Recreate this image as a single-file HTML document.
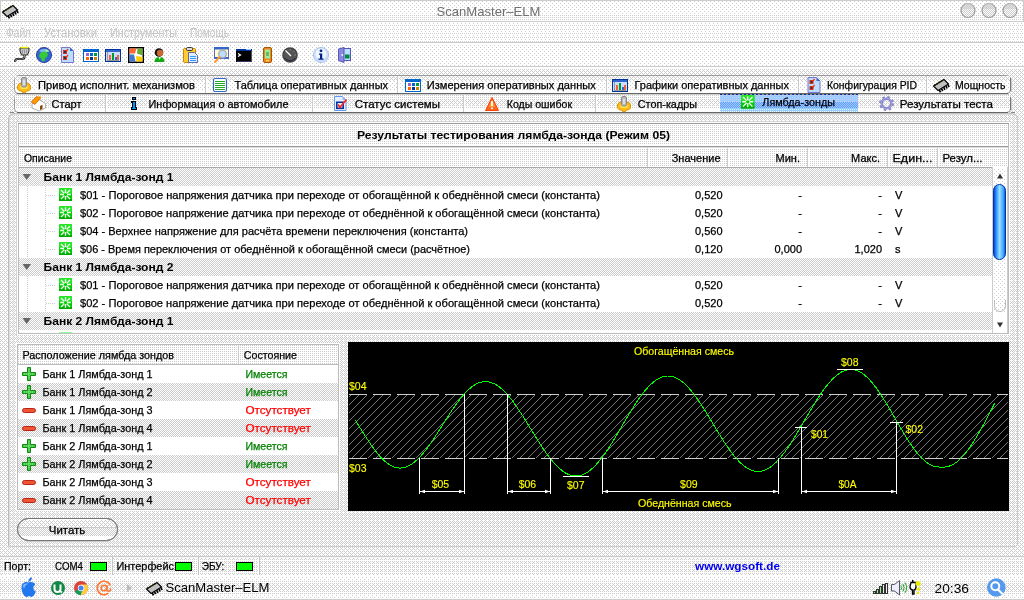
<!DOCTYPE html>
<html lang="ru"><head><meta charset="utf-8"><title>ScanMaster-ELM</title>
<style>
html,body{margin:0;padding:0;background:#fff;width:1024px;height:600px;overflow:hidden}
svg{display:block;position:absolute;left:0;top:0;will-change:transform}
text{font-family:'Liberation Sans',sans-serif;white-space:pre}
</style></head><body>
<svg width="1024" height="600" viewBox="0 0 1024 600" shape-rendering="crispEdges">
<defs>
<pattern id="p8" width="4" height="4" patternUnits="userSpaceOnUse"><rect width="4" height="4" fill="#fff"/><rect x="0" y="3" width="1" height="1" fill="#ccc"/><rect x="2" y="1" width="1" height="1" fill="#ccc"/></pattern>
<pattern id="p4" width="2" height="2" patternUnits="userSpaceOnUse"><rect width="2" height="2" fill="#fff"/><rect x="0" y="1" width="1" height="1" fill="#ccc"/></pattern>
<pattern id="p38" width="4" height="4" patternUnits="userSpaceOnUse"><rect width="4" height="4" fill="#fff"/><rect x="0" y="1" width="1" height="1" fill="#ccc"/><rect x="2" y="1" width="1" height="1" fill="#ccc"/><rect x="0" y="3" width="1" height="1" fill="#ccc"/><rect x="2" y="3" width="1" height="1" fill="#ccc"/><rect x="1" y="0" width="1" height="1" fill="#ccc"/><rect x="3" y="2" width="1" height="1" fill="#ccc"/></pattern>
<pattern id="p2" width="2" height="2" patternUnits="userSpaceOnUse"><rect width="2" height="2" fill="#fff"/><rect x="0" y="1" width="1" height="1" fill="#ccc"/><rect x="1" y="0" width="1" height="1" fill="#ccc"/></pattern>
<pattern id="p716" width="4" height="4" patternUnits="userSpaceOnUse"><rect width="4" height="4" fill="#fff"/><rect x="0" y="1" width="1" height="1" fill="#ccc"/><rect x="2" y="1" width="1" height="1" fill="#ccc"/><rect x="0" y="3" width="1" height="1" fill="#ccc"/><rect x="2" y="3" width="1" height="1" fill="#ccc"/><rect x="1" y="0" width="1" height="1" fill="#ccc"/><rect x="3" y="2" width="1" height="1" fill="#ccc"/><rect x="1" y="2" width="1" height="1" fill="#ccc"/></pattern>
<pattern id="p516" width="4" height="4" patternUnits="userSpaceOnUse"><rect width="4" height="4" fill="#fff"/><rect x="0" y="1" width="1" height="1" fill="#ccc"/><rect x="2" y="1" width="1" height="1" fill="#ccc"/><rect x="0" y="3" width="1" height="1" fill="#ccc"/><rect x="2" y="3" width="1" height="1" fill="#ccc"/><rect x="1" y="2" width="1" height="1" fill="#ccc"/></pattern>
<pattern id="p316" width="4" height="4" patternUnits="userSpaceOnUse"><rect width="4" height="4" fill="#fff"/><rect x="0" y="1" width="1" height="1" fill="#ccc"/><rect x="2" y="1" width="1" height="1" fill="#ccc"/><rect x="1" y="3" width="1" height="1" fill="#ccc"/></pattern>
<pattern id="pb1" width="2" height="2" patternUnits="userSpaceOnUse"><rect width="2" height="2" fill="#9cf"/><rect x="0" y="1" width="1" height="1" fill="#ccf"/></pattern>
<pattern id="pb2" width="2" height="2" patternUnits="userSpaceOnUse"><rect width="2" height="2" fill="#9cf"/><rect x="0" y="1" width="1" height="1" fill="#69f"/><rect x="1" y="0" width="1" height="1" fill="#69f"/></pattern>
<pattern id="pb3" width="2" height="2" patternUnits="userSpaceOnUse"><rect width="2" height="2" fill="#9cf"/><rect x="0" y="1" width="1" height="1" fill="#cff"/></pattern>
<pattern id="pb4" width="2" height="2" patternUnits="userSpaceOnUse"><rect width="2" height="2" fill="#9cf"/><rect x="0" y="1" width="1" height="1" fill="#fff"/><rect x="1" y="0" width="1" height="1" fill="#fff"/></pattern>
<pattern id="pb0" width="4" height="1" patternUnits="userSpaceOnUse"><rect width="4" height="1" fill="#999"/><rect x="0" y="0" width="2" height="1" fill="#039"/></pattern>
<pattern id="hatch" width="8" height="8" patternUnits="userSpaceOnUse" x="351" y="395"><rect width="8" height="8" fill="#000"/>
<rect x="0" y="7" width="1" height="1" fill="#777"/>
<rect x="1" y="6" width="1" height="1" fill="#777"/>
<rect x="2" y="5" width="1" height="1" fill="#777"/>
<rect x="3" y="4" width="1" height="1" fill="#777"/>
<rect x="4" y="3" width="1" height="1" fill="#777"/>
<rect x="5" y="2" width="1" height="1" fill="#777"/>
<rect x="6" y="1" width="1" height="1" fill="#777"/>
<rect x="7" y="0" width="1" height="1" fill="#777"/>
</pattern>
</defs>
<rect x="0" y="0" width="1024" height="600" fill="#fff" />
<rect x="1" y="1" width="1022" height="14" fill="url(#p8)" />
<rect x="1" y="15" width="1022" height="6" fill="url(#p4)" />
<rect x="0" y="0" width="1024" height="1" fill="#ccc" />
<rect x="0" y="21" width="1024" height="1" fill="#ccc" />
<rect x="0" y="0" width="1" height="22" fill="#ccc" />
<rect x="1023" y="0" width="1" height="22" fill="#ccc" />
<rect x="0" y="22" width="1024" height="20" fill="url(#p316)" />
<rect x="0" y="42" width="1024" height="1" fill="#ccc" />
<rect x="0" y="44" width="1024" height="22" fill="url(#p8)" />
<rect x="0" y="66" width="1024" height="1" fill="#ccc" />
<rect x="0" y="69" width="1024" height="487" fill="url(#p38)" />
<rect x="0" y="556" width="1024" height="19" fill="url(#p516)" />
<rect x="0" y="577" width="1024" height="4" fill="url(#p8)" />
<rect x="0" y="581" width="1024" height="3" fill="url(#p4)" />
<rect x="0" y="584" width="1024" height="7" fill="url(#p38)" />
<rect x="0" y="591" width="1024" height="3" fill="url(#p4)" />
<rect x="0" y="594" width="1024" height="4" fill="url(#p8)" />
<rect x="4" y="597" width="1" height="1" fill="#fcc" />
<rect x="12" y="597" width="1" height="1" fill="#fcc" />
<rect x="20" y="597" width="1" height="1" fill="#fcc" />
<rect x="28" y="597" width="1" height="1" fill="#fcc" />
<rect x="36" y="597" width="1" height="1" fill="#fcc" />
<rect x="44" y="597" width="1" height="1" fill="#fcc" />
<rect x="52" y="597" width="1" height="1" fill="#fcc" />
<rect x="60" y="597" width="1" height="1" fill="#fcc" />
<rect x="68" y="597" width="1" height="1" fill="#fcc" />
<rect x="76" y="597" width="1" height="1" fill="#fcc" />
<rect x="84" y="597" width="1" height="1" fill="#fcc" />
<rect x="92" y="597" width="1" height="1" fill="#fcc" />
<rect x="100" y="597" width="1" height="1" fill="#fcc" />
<rect x="108" y="597" width="1" height="1" fill="#fcc" />
<rect x="116" y="597" width="1" height="1" fill="#fcc" />
<rect x="124" y="597" width="1" height="1" fill="#fcc" />
<rect x="132" y="597" width="1" height="1" fill="#fcc" />
<rect x="140" y="597" width="1" height="1" fill="#fcc" />
<rect x="148" y="597" width="1" height="1" fill="#fcc" />
<rect x="156" y="597" width="1" height="1" fill="#fcc" />
<rect x="164" y="597" width="1" height="1" fill="#fcc" />
<rect x="172" y="597" width="1" height="1" fill="#fcc" />
<rect x="180" y="597" width="1" height="1" fill="#fcc" />
<rect x="188" y="597" width="1" height="1" fill="#fcc" />
<rect x="196" y="597" width="1" height="1" fill="#fcc" />
<rect x="204" y="597" width="1" height="1" fill="#fcc" />
<rect x="212" y="597" width="1" height="1" fill="#fcc" />
<rect x="220" y="597" width="1" height="1" fill="#fcc" />
<rect x="228" y="597" width="1" height="1" fill="#fcc" />
<rect x="236" y="597" width="1" height="1" fill="#fcc" />
<rect x="244" y="597" width="1" height="1" fill="#fcc" />
<rect x="252" y="597" width="1" height="1" fill="#fcc" />
<rect x="260" y="597" width="1" height="1" fill="#fcc" />
<rect x="268" y="597" width="1" height="1" fill="#fcc" />
<rect x="276" y="597" width="1" height="1" fill="#fcc" />
<rect x="284" y="597" width="1" height="1" fill="#fcc" />
<rect x="292" y="597" width="1" height="1" fill="#fcc" />
<rect x="300" y="597" width="1" height="1" fill="#fcc" />
<rect x="308" y="597" width="1" height="1" fill="#fcc" />
<rect x="316" y="597" width="1" height="1" fill="#fcc" />
<rect x="324" y="597" width="1" height="1" fill="#fcc" />
<rect x="332" y="597" width="1" height="1" fill="#fcc" />
<rect x="340" y="597" width="1" height="1" fill="#fcc" />
<rect x="348" y="597" width="1" height="1" fill="#fcc" />
<rect x="356" y="597" width="1" height="1" fill="#fcc" />
<rect x="364" y="597" width="1" height="1" fill="#fcc" />
<rect x="372" y="597" width="1" height="1" fill="#fcc" />
<rect x="380" y="597" width="1" height="1" fill="#fcc" />
<rect x="388" y="597" width="1" height="1" fill="#fcc" />
<rect x="396" y="597" width="1" height="1" fill="#fcc" />
<rect x="404" y="597" width="1" height="1" fill="#fcc" />
<rect x="412" y="597" width="1" height="1" fill="#fcc" />
<rect x="420" y="597" width="1" height="1" fill="#fcc" />
<rect x="428" y="597" width="1" height="1" fill="#fcc" />
<rect x="436" y="597" width="1" height="1" fill="#fcc" />
<rect x="444" y="597" width="1" height="1" fill="#fcc" />
<rect x="452" y="597" width="1" height="1" fill="#fcc" />
<rect x="460" y="597" width="1" height="1" fill="#fcc" />
<rect x="468" y="597" width="1" height="1" fill="#fcc" />
<rect x="476" y="597" width="1" height="1" fill="#fcc" />
<rect x="484" y="597" width="1" height="1" fill="#fcc" />
<rect x="492" y="597" width="1" height="1" fill="#fcc" />
<rect x="500" y="597" width="1" height="1" fill="#fcc" />
<rect x="508" y="597" width="1" height="1" fill="#fcc" />
<rect x="516" y="597" width="1" height="1" fill="#fcc" />
<rect x="524" y="597" width="1" height="1" fill="#fcc" />
<rect x="532" y="597" width="1" height="1" fill="#fcc" />
<rect x="540" y="597" width="1" height="1" fill="#fcc" />
<rect x="548" y="597" width="1" height="1" fill="#fcc" />
<rect x="556" y="597" width="1" height="1" fill="#fcc" />
<rect x="564" y="597" width="1" height="1" fill="#fcc" />
<rect x="572" y="597" width="1" height="1" fill="#fcc" />
<rect x="580" y="597" width="1" height="1" fill="#fcc" />
<rect x="588" y="597" width="1" height="1" fill="#fcc" />
<rect x="596" y="597" width="1" height="1" fill="#fcc" />
<rect x="604" y="597" width="1" height="1" fill="#fcc" />
<rect x="612" y="597" width="1" height="1" fill="#fcc" />
<rect x="620" y="597" width="1" height="1" fill="#fcc" />
<rect x="628" y="597" width="1" height="1" fill="#fcc" />
<rect x="636" y="597" width="1" height="1" fill="#fcc" />
<rect x="644" y="597" width="1" height="1" fill="#fcc" />
<rect x="652" y="597" width="1" height="1" fill="#fcc" />
<rect x="660" y="597" width="1" height="1" fill="#fcc" />
<rect x="668" y="597" width="1" height="1" fill="#fcc" />
<rect x="676" y="597" width="1" height="1" fill="#fcc" />
<rect x="684" y="597" width="1" height="1" fill="#fcc" />
<rect x="692" y="597" width="1" height="1" fill="#fcc" />
<rect x="700" y="597" width="1" height="1" fill="#fcc" />
<rect x="708" y="597" width="1" height="1" fill="#fcc" />
<rect x="716" y="597" width="1" height="1" fill="#fcc" />
<rect x="724" y="597" width="1" height="1" fill="#fcc" />
<rect x="732" y="597" width="1" height="1" fill="#fcc" />
<rect x="740" y="597" width="1" height="1" fill="#fcc" />
<rect x="748" y="597" width="1" height="1" fill="#fcc" />
<rect x="756" y="597" width="1" height="1" fill="#fcc" />
<rect x="764" y="597" width="1" height="1" fill="#fcc" />
<rect x="772" y="597" width="1" height="1" fill="#fcc" />
<rect x="780" y="597" width="1" height="1" fill="#fcc" />
<rect x="788" y="597" width="1" height="1" fill="#fcc" />
<rect x="796" y="597" width="1" height="1" fill="#fcc" />
<rect x="804" y="597" width="1" height="1" fill="#fcc" />
<rect x="812" y="597" width="1" height="1" fill="#fcc" />
<rect x="820" y="597" width="1" height="1" fill="#fcc" />
<rect x="828" y="597" width="1" height="1" fill="#fcc" />
<rect x="836" y="597" width="1" height="1" fill="#fcc" />
<rect x="844" y="597" width="1" height="1" fill="#fcc" />
<rect x="852" y="597" width="1" height="1" fill="#fcc" />
<rect x="860" y="597" width="1" height="1" fill="#fcc" />
<rect x="868" y="597" width="1" height="1" fill="#fcc" />
<rect x="876" y="597" width="1" height="1" fill="#fcc" />
<rect x="884" y="597" width="1" height="1" fill="#fcc" />
<rect x="892" y="597" width="1" height="1" fill="#fcc" />
<rect x="900" y="597" width="1" height="1" fill="#fcc" />
<rect x="908" y="597" width="1" height="1" fill="#fcc" />
<rect x="916" y="597" width="1" height="1" fill="#fcc" />
<rect x="924" y="597" width="1" height="1" fill="#fcc" />
<rect x="932" y="597" width="1" height="1" fill="#fcc" />
<rect x="940" y="597" width="1" height="1" fill="#fcc" />
<rect x="948" y="597" width="1" height="1" fill="#fcc" />
<rect x="956" y="597" width="1" height="1" fill="#fcc" />
<rect x="964" y="597" width="1" height="1" fill="#fcc" />
<rect x="972" y="597" width="1" height="1" fill="#fcc" />
<rect x="980" y="597" width="1" height="1" fill="#fcc" />
<rect x="988" y="597" width="1" height="1" fill="#fcc" />
<rect x="996" y="597" width="1" height="1" fill="#fcc" />
<rect x="1004" y="597" width="1" height="1" fill="#fcc" />
<rect x="1012" y="597" width="1" height="1" fill="#fcc" />
<rect x="1020" y="597" width="1" height="1" fill="#fcc" />
<rect x="0" y="599" width="1024" height="1" fill="#ccc" />
<text x="436.5" y="16" fill="#707070" font-size="13" textLength="104" lengthAdjust="spacingAndGlyphs" >ScanMaster–ELM</text>
<text x="6" y="37" fill="#c4c4c4" font-size="12" textLength="25" lengthAdjust="spacingAndGlyphs" >Файл</text>
<text x="44" y="37" fill="#c4c4c4" font-size="12" textLength="53" lengthAdjust="spacingAndGlyphs" >Установки</text>
<text x="110" y="37" fill="#c4c4c4" font-size="12" textLength="67" lengthAdjust="spacingAndGlyphs" >Инструменты</text>
<text x="190" y="37" fill="#c4c4c4" font-size="12" textLength="39" lengthAdjust="spacingAndGlyphs" >Помощь</text>
<g shape-rendering="auto"><circle cx="968" cy="10.5" r="7" fill="url(#p2)" stroke="#999" stroke-width="1.2"/><path d="M962 9 A6 6 0 0 1 974 9 Z" fill="#ccc" opacity=".6"/></g>
<g shape-rendering="auto"><circle cx="989" cy="10.5" r="7" fill="url(#p2)" stroke="#999" stroke-width="1.2"/><path d="M983 9 A6 6 0 0 1 995 9 Z" fill="#ccc" opacity=".6"/></g>
<g shape-rendering="auto"><circle cx="1010" cy="10.5" r="7" fill="url(#p2)" stroke="#999" stroke-width="1.2"/><path d="M1004 9 A6 6 0 0 1 1016 9 Z" fill="#ccc" opacity=".6"/></g>
<g shape-rendering="auto"><rect x="14.5" y="75.5" width="996" height="18" rx="4" fill="#fff" stroke="#999"/></g>
<rect x="15" y="76" width="995" height="5" fill="url(#p38)" />
<rect x="15" y="81" width="995" height="9" fill="url(#p8)" />
<rect x="17" y="93" width="991" height="1" fill="#666" />
<rect x="17" y="94" width="992" height="1" fill="#ccc" />
<rect x="1010" y="78" width="1" height="13" fill="#777" />
<rect x="1011" y="79" width="1" height="13" fill="#ccc" />
<rect x="205" y="76" width="1" height="17" fill="#ccc" />
<rect x="206" y="76" width="1" height="17" fill="#fff" />
<rect x="397" y="76" width="1" height="17" fill="#ccc" />
<rect x="398" y="76" width="1" height="17" fill="#fff" />
<rect x="606" y="76" width="1" height="17" fill="#ccc" />
<rect x="607" y="76" width="1" height="17" fill="#fff" />
<rect x="798" y="76" width="1" height="17" fill="#ccc" />
<rect x="799" y="76" width="1" height="17" fill="#fff" />
<rect x="926" y="76" width="1" height="17" fill="#ccc" />
<rect x="927" y="76" width="1" height="17" fill="#fff" />
<g shape-rendering="auto"><rect x="14.5" y="94.5" width="996" height="18" rx="4" fill="#fff" stroke="#999"/></g>
<rect x="15" y="95" width="995" height="4" fill="url(#p4)" />
<rect x="15" y="99" width="995" height="6" fill="url(#p38)" />
<rect x="15" y="105" width="995" height="4" fill="url(#p4)" />
<rect x="17" y="112" width="991" height="1" fill="#666" />
<rect x="17" y="113" width="992" height="1" fill="#ccc" />
<rect x="1010" y="97" width="1" height="13" fill="#777" />
<rect x="1011" y="98" width="1" height="13" fill="#ccc" />
<rect x="105" y="95" width="1" height="17" fill="#ccc" />
<rect x="106" y="95" width="1" height="17" fill="#fff" />
<rect x="312" y="95" width="1" height="17" fill="#ccc" />
<rect x="313" y="95" width="1" height="17" fill="#fff" />
<rect x="463" y="95" width="1" height="17" fill="#ccc" />
<rect x="464" y="95" width="1" height="17" fill="#fff" />
<rect x="595" y="95" width="1" height="17" fill="#ccc" />
<rect x="596" y="95" width="1" height="17" fill="#fff" />
<rect x="17" y="94" width="991" height="1" fill="#d0d0d0" />
<rect x="720" y="94" width="138" height="1" fill="url(#pb0)" />
<rect x="720" y="95" width="138" height="7" fill="url(#pb1)" />
<rect x="720" y="102" width="138" height="6" fill="url(#pb2)" />
<rect x="720" y="108" width="138" height="3" fill="url(#pb3)" />
<rect x="720" y="111" width="138" height="1" fill="url(#pb4)" />
<text x="38" y="89" fill="#000" font-size="11" stroke="#000" stroke-width="0.25" textLength="157" lengthAdjust="spacingAndGlyphs" >Привод исполнит. механизмов</text>
<text x="234.5" y="89" fill="#000" font-size="11" stroke="#000" stroke-width="0.25" textLength="153.5" lengthAdjust="spacingAndGlyphs" >Таблица оперативных данных</text>
<text x="426.75" y="89" fill="#000" font-size="11" stroke="#000" stroke-width="0.25" textLength="169" lengthAdjust="spacingAndGlyphs" >Измерения оперативных данных</text>
<text x="634.5" y="89" fill="#000" font-size="11" stroke="#000" stroke-width="0.25" textLength="154.5" lengthAdjust="spacingAndGlyphs" >Графики оперативных данных</text>
<text x="827" y="89" fill="#000" font-size="11" stroke="#000" stroke-width="0.25" textLength="90" lengthAdjust="spacingAndGlyphs" >Конфигурация PID</text>
<text x="955" y="89" fill="#000" font-size="11" stroke="#000" stroke-width="0.25" textLength="50.5" lengthAdjust="spacingAndGlyphs" >Мощность</text>
<text x="51.5" y="108" fill="#000" font-size="11" stroke="#000" stroke-width="0.25" textLength="30" lengthAdjust="spacingAndGlyphs" >Старт</text>
<text x="148.5" y="108" fill="#000" font-size="11" stroke="#000" stroke-width="0.25" textLength="140" lengthAdjust="spacingAndGlyphs" >Информация о автомобиле</text>
<text x="354.75" y="108" fill="#000" font-size="11" stroke="#000" stroke-width="0.25" textLength="85.25" lengthAdjust="spacingAndGlyphs" >Статус системы</text>
<text x="506.75" y="108" fill="#000" font-size="11" stroke="#000" stroke-width="0.25" textLength="65.25" lengthAdjust="spacingAndGlyphs" >Коды ошибок</text>
<text x="637.75" y="108" fill="#000" font-size="11" stroke="#000" stroke-width="0.25" textLength="59.25" lengthAdjust="spacingAndGlyphs" >Стоп-кадры</text>
<text x="899.75" y="108" fill="#000" font-size="11" stroke="#000" stroke-width="0.25" textLength="93.25" lengthAdjust="spacingAndGlyphs" >Результаты теста</text>
<text x="762.3" y="106" fill="#000" font-size="11" stroke="#000" stroke-width="0.25" textLength="72.7" lengthAdjust="spacingAndGlyphs" >Лямбда-зонды</text>
<g shape-rendering="auto"><path d="M8.5 546.5 V120 Q8.5 113.500 15 113.500 H1011 Q1017.500 113.500 1017.500 120 V544 Q1017.500 546.500 1015 546.500 Z" fill="url(#p716)" stroke="none"/><path d="M8.5 546.5 V120 Q8.5 113.500 15 113.500" fill="none" stroke="#bbb"/><path d="M15 113.500 H1011 Q1017.500 113.500 1017.500 120" fill="none" stroke="#c4c4c4"/><path d="M10 112.500 H14 M1011 112.500 H1015" stroke="#888"/><path d="M9.5 545.5 V120 Q9.5 114.500 15 114.500 H1011" fill="none" stroke="#ddd"/><path d="M1017.500 120 V544 Q1017.500 546.500 1015 546.500 H8.500" fill="none" stroke="#ccc"/></g>
<rect x="16" y="121" width="994" height="1" fill="#d4d4d4" />
<rect x="16" y="121" width="1" height="214" fill="#d4d4d4" />
<rect x="17" y="122" width="993" height="213" fill="#fff" />
<rect x="18" y="123" width="991" height="211" fill="#999" />
<rect x="18" y="124" width="1" height="209" fill="#bbb" />
<rect x="1008" y="124" width="1" height="209" fill="#bbb" />
<rect x="18" y="333" width="991" height="1" fill="#bbb" />
<rect x="19" y="124" width="989" height="209" fill="#fff" />
<rect x="19" y="124" width="989" height="20" fill="url(#p4)" />
<rect x="19" y="146" width="989" height="1" fill="#999" />
<rect x="19" y="147" width="989" height="1" fill="#ddd" />
<rect x="19" y="148" width="989" height="19" fill="url(#p4)" />
<rect x="19" y="167" width="989" height="1" fill="#aaa" />
<rect x="647" y="148" width="1" height="19" fill="#ccc" />
<rect x="648" y="148" width="1" height="19" fill="#fff" />
<rect x="727" y="148" width="1" height="19" fill="#ccc" />
<rect x="728" y="148" width="1" height="19" fill="#fff" />
<rect x="807" y="148" width="1" height="19" fill="#ccc" />
<rect x="808" y="148" width="1" height="19" fill="#fff" />
<rect x="887" y="148" width="1" height="19" fill="#ccc" />
<rect x="888" y="148" width="1" height="19" fill="#fff" />
<rect x="937" y="148" width="1" height="19" fill="#ccc" />
<rect x="938" y="148" width="1" height="19" fill="#fff" />
<text x="357" y="139" fill="#000" font-size="11" font-weight="bold" textLength="313" lengthAdjust="spacingAndGlyphs" >Результаты тестирования лямбда-зонда (Режим 05)</text>
<text x="24" y="162" fill="#000" font-size="11" stroke="#000" stroke-width="0.25" textLength="48" lengthAdjust="spacingAndGlyphs" >Описание</text>
<text x="720.5" y="162" fill="#000" font-size="11" stroke="#000" stroke-width="0.25" text-anchor="end" >Значение</text>
<text x="800" y="162" fill="#000" font-size="11" stroke="#000" stroke-width="0.25" text-anchor="end" >Мин.</text>
<text x="880" y="162" fill="#000" font-size="11" stroke="#000" stroke-width="0.25" text-anchor="end" >Макс.</text>
<text x="892.5" y="162" fill="#000" font-size="11" stroke="#000" stroke-width="0.25" textLength="40" lengthAdjust="spacingAndGlyphs" >Един...</text>
<text x="942.5" y="162" fill="#000" font-size="11" stroke="#000" stroke-width="0.25" textLength="40" lengthAdjust="spacingAndGlyphs" >Резул...</text>
<rect x="27" y="186" width="1" height="1" fill="#ccc" />
<rect x="27" y="188" width="1" height="1" fill="#ccc" />
<rect x="27" y="190" width="1" height="1" fill="#ccc" />
<rect x="27" y="192" width="1" height="1" fill="#ccc" />
<rect x="27" y="194" width="1" height="1" fill="#ccc" />
<rect x="27" y="196" width="1" height="1" fill="#ccc" />
<rect x="27" y="198" width="1" height="1" fill="#ccc" />
<rect x="27" y="200" width="1" height="1" fill="#ccc" />
<rect x="27" y="202" width="1" height="1" fill="#ccc" />
<rect x="27" y="204" width="1" height="1" fill="#ccc" />
<rect x="27" y="206" width="1" height="1" fill="#ccc" />
<rect x="27" y="208" width="1" height="1" fill="#ccc" />
<rect x="27" y="210" width="1" height="1" fill="#ccc" />
<rect x="27" y="212" width="1" height="1" fill="#ccc" />
<rect x="27" y="214" width="1" height="1" fill="#ccc" />
<rect x="27" y="216" width="1" height="1" fill="#ccc" />
<rect x="27" y="218" width="1" height="1" fill="#ccc" />
<rect x="27" y="220" width="1" height="1" fill="#ccc" />
<rect x="27" y="222" width="1" height="1" fill="#ccc" />
<rect x="27" y="224" width="1" height="1" fill="#ccc" />
<rect x="27" y="226" width="1" height="1" fill="#ccc" />
<rect x="27" y="228" width="1" height="1" fill="#ccc" />
<rect x="27" y="230" width="1" height="1" fill="#ccc" />
<rect x="27" y="232" width="1" height="1" fill="#ccc" />
<rect x="27" y="234" width="1" height="1" fill="#ccc" />
<rect x="27" y="236" width="1" height="1" fill="#ccc" />
<rect x="27" y="238" width="1" height="1" fill="#ccc" />
<rect x="27" y="240" width="1" height="1" fill="#ccc" />
<rect x="27" y="242" width="1" height="1" fill="#ccc" />
<rect x="27" y="244" width="1" height="1" fill="#ccc" />
<rect x="27" y="246" width="1" height="1" fill="#ccc" />
<rect x="27" y="248" width="1" height="1" fill="#ccc" />
<rect x="27" y="250" width="1" height="1" fill="#ccc" />
<rect x="27" y="252" width="1" height="1" fill="#ccc" />
<rect x="27" y="254" width="1" height="1" fill="#ccc" />
<rect x="27" y="256" width="1" height="1" fill="#ccc" />
<rect x="27" y="258" width="1" height="1" fill="#ccc" />
<rect x="27" y="260" width="1" height="1" fill="#ccc" />
<rect x="27" y="262" width="1" height="1" fill="#ccc" />
<rect x="27" y="264" width="1" height="1" fill="#ccc" />
<rect x="27" y="266" width="1" height="1" fill="#ccc" />
<rect x="27" y="268" width="1" height="1" fill="#ccc" />
<rect x="27" y="270" width="1" height="1" fill="#ccc" />
<rect x="27" y="272" width="1" height="1" fill="#ccc" />
<rect x="27" y="274" width="1" height="1" fill="#ccc" />
<rect x="27" y="276" width="1" height="1" fill="#ccc" />
<rect x="27" y="278" width="1" height="1" fill="#ccc" />
<rect x="27" y="280" width="1" height="1" fill="#ccc" />
<rect x="27" y="282" width="1" height="1" fill="#ccc" />
<rect x="27" y="284" width="1" height="1" fill="#ccc" />
<rect x="27" y="286" width="1" height="1" fill="#ccc" />
<rect x="27" y="288" width="1" height="1" fill="#ccc" />
<rect x="27" y="290" width="1" height="1" fill="#ccc" />
<rect x="27" y="292" width="1" height="1" fill="#ccc" />
<rect x="27" y="294" width="1" height="1" fill="#ccc" />
<rect x="27" y="296" width="1" height="1" fill="#ccc" />
<rect x="27" y="298" width="1" height="1" fill="#ccc" />
<rect x="27" y="300" width="1" height="1" fill="#ccc" />
<rect x="27" y="302" width="1" height="1" fill="#ccc" />
<rect x="27" y="304" width="1" height="1" fill="#ccc" />
<rect x="27" y="306" width="1" height="1" fill="#ccc" />
<rect x="27" y="308" width="1" height="1" fill="#ccc" />
<rect x="27" y="310" width="1" height="1" fill="#ccc" />
<rect x="45" y="186" width="1" height="1" fill="#ccc" />
<rect x="45" y="188" width="1" height="1" fill="#ccc" />
<rect x="45" y="190" width="1" height="1" fill="#ccc" />
<rect x="45" y="192" width="1" height="1" fill="#ccc" />
<rect x="45" y="194" width="1" height="1" fill="#ccc" />
<rect x="45" y="196" width="1" height="1" fill="#ccc" />
<rect x="45" y="198" width="1" height="1" fill="#ccc" />
<rect x="45" y="200" width="1" height="1" fill="#ccc" />
<rect x="45" y="202" width="1" height="1" fill="#ccc" />
<rect x="45" y="204" width="1" height="1" fill="#ccc" />
<rect x="45" y="206" width="1" height="1" fill="#ccc" />
<rect x="45" y="208" width="1" height="1" fill="#ccc" />
<rect x="45" y="210" width="1" height="1" fill="#ccc" />
<rect x="45" y="212" width="1" height="1" fill="#ccc" />
<rect x="45" y="214" width="1" height="1" fill="#ccc" />
<rect x="45" y="216" width="1" height="1" fill="#ccc" />
<rect x="45" y="218" width="1" height="1" fill="#ccc" />
<rect x="45" y="220" width="1" height="1" fill="#ccc" />
<rect x="45" y="222" width="1" height="1" fill="#ccc" />
<rect x="45" y="224" width="1" height="1" fill="#ccc" />
<rect x="45" y="226" width="1" height="1" fill="#ccc" />
<rect x="45" y="228" width="1" height="1" fill="#ccc" />
<rect x="45" y="230" width="1" height="1" fill="#ccc" />
<rect x="45" y="232" width="1" height="1" fill="#ccc" />
<rect x="45" y="234" width="1" height="1" fill="#ccc" />
<rect x="45" y="236" width="1" height="1" fill="#ccc" />
<rect x="45" y="238" width="1" height="1" fill="#ccc" />
<rect x="45" y="240" width="1" height="1" fill="#ccc" />
<rect x="45" y="242" width="1" height="1" fill="#ccc" />
<rect x="45" y="244" width="1" height="1" fill="#ccc" />
<rect x="45" y="246" width="1" height="1" fill="#ccc" />
<rect x="45" y="248" width="1" height="1" fill="#ccc" />
<rect x="45" y="250" width="1" height="1" fill="#ccc" />
<rect x="45" y="252" width="1" height="1" fill="#ccc" />
<rect x="45" y="254" width="1" height="1" fill="#ccc" />
<rect x="45" y="256" width="1" height="1" fill="#ccc" />
<rect x="45" y="276" width="1" height="1" fill="#ccc" />
<rect x="45" y="278" width="1" height="1" fill="#ccc" />
<rect x="45" y="280" width="1" height="1" fill="#ccc" />
<rect x="45" y="282" width="1" height="1" fill="#ccc" />
<rect x="45" y="284" width="1" height="1" fill="#ccc" />
<rect x="45" y="286" width="1" height="1" fill="#ccc" />
<rect x="45" y="288" width="1" height="1" fill="#ccc" />
<rect x="45" y="290" width="1" height="1" fill="#ccc" />
<rect x="45" y="292" width="1" height="1" fill="#ccc" />
<rect x="45" y="294" width="1" height="1" fill="#ccc" />
<rect x="45" y="296" width="1" height="1" fill="#ccc" />
<rect x="45" y="298" width="1" height="1" fill="#ccc" />
<rect x="45" y="300" width="1" height="1" fill="#ccc" />
<rect x="45" y="302" width="1" height="1" fill="#ccc" />
<rect x="45" y="304" width="1" height="1" fill="#ccc" />
<rect x="45" y="306" width="1" height="1" fill="#ccc" />
<rect x="45" y="308" width="1" height="1" fill="#ccc" />
<rect x="45" y="310" width="1" height="1" fill="#ccc" />
<rect x="19" y="168" width="973" height="18" fill="url(#p2)" />
<path d="M22.500 174 h8.500 l-4.250 6 z" fill="#666" shape-rendering="auto"/>
<text x="43.5" y="181" fill="#000" font-size="11" font-weight="bold" textLength="130" lengthAdjust="spacingAndGlyphs" >Банк 1 Лямбда-зонд 1</text>
<rect x="46" y="195" width="1" height="1" fill="#ccc" />
<rect x="48" y="195" width="1" height="1" fill="#ccc" />
<rect x="50" y="195" width="1" height="1" fill="#ccc" />
<rect x="52" y="195" width="1" height="1" fill="#ccc" />
<rect x="54" y="195" width="1" height="1" fill="#ccc" />
<g shape-rendering="auto"><rect x="59" y="188" width="13" height="13" rx="1" fill="#0c0"/><rect x="59" y="188" width="13" height="5.8500000000000005" rx="1" fill="#3e3" opacity=".75"/><rect x="59" y="199" width="13" height="2" fill="#0a0"/><path d="M67.10 194.50 L70.80 194.50 M66.63 195.63 L70.00 199.00 M65.50 196.10 L65.50 199.80 M64.37 195.63 L61.00 199.00 M63.90 194.50 L60.20 194.50 M64.37 193.37 L61.00 190.00 M65.50 192.90 L65.50 189.20 M66.63 193.37 L70.00 190.00 " stroke="#fff" stroke-width="1.3" stroke-linecap="butt" fill="none"/></g>
<text x="80" y="199" fill="#000" font-size="11" stroke="#000" stroke-width="0.25" textLength="520" lengthAdjust="spacingAndGlyphs" >$01 - Пороговое напряжения датчика при переходе от обогащённой к обеднённой смеси (константа)</text>
<text x="722.5" y="199" fill="#000" font-size="11" stroke="#000" stroke-width="0.25" text-anchor="end" >0,520</text>
<text x="802" y="199" fill="#000" font-size="11" stroke="#000" stroke-width="0.25" text-anchor="end" >-</text>
<text x="882" y="199" fill="#000" font-size="11" stroke="#000" stroke-width="0.25" text-anchor="end" >-</text>
<text x="895" y="199" fill="#000" font-size="11" stroke="#000" stroke-width="0.25" >V</text>
<rect x="46" y="213" width="1" height="1" fill="#ccc" />
<rect x="48" y="213" width="1" height="1" fill="#ccc" />
<rect x="50" y="213" width="1" height="1" fill="#ccc" />
<rect x="52" y="213" width="1" height="1" fill="#ccc" />
<rect x="54" y="213" width="1" height="1" fill="#ccc" />
<g shape-rendering="auto"><rect x="59" y="206" width="13" height="13" rx="1" fill="#0c0"/><rect x="59" y="206" width="13" height="5.8500000000000005" rx="1" fill="#3e3" opacity=".75"/><rect x="59" y="217" width="13" height="2" fill="#0a0"/><path d="M67.10 212.50 L70.80 212.50 M66.63 213.63 L70.00 217.00 M65.50 214.10 L65.50 217.80 M64.37 213.63 L61.00 217.00 M63.90 212.50 L60.20 212.50 M64.37 211.37 L61.00 208.00 M65.50 210.90 L65.50 207.20 M66.63 211.37 L70.00 208.00 " stroke="#fff" stroke-width="1.3" stroke-linecap="butt" fill="none"/></g>
<text x="80" y="217" fill="#000" font-size="11" stroke="#000" stroke-width="0.25" textLength="520" lengthAdjust="spacingAndGlyphs" >$02 - Пороговое напряжение датчика при переходе от обеднённой к обогащённой смеси (константа)</text>
<text x="722.5" y="217" fill="#000" font-size="11" stroke="#000" stroke-width="0.25" text-anchor="end" >0,520</text>
<text x="802" y="217" fill="#000" font-size="11" stroke="#000" stroke-width="0.25" text-anchor="end" >-</text>
<text x="882" y="217" fill="#000" font-size="11" stroke="#000" stroke-width="0.25" text-anchor="end" >-</text>
<text x="895" y="217" fill="#000" font-size="11" stroke="#000" stroke-width="0.25" >V</text>
<rect x="46" y="231" width="1" height="1" fill="#ccc" />
<rect x="48" y="231" width="1" height="1" fill="#ccc" />
<rect x="50" y="231" width="1" height="1" fill="#ccc" />
<rect x="52" y="231" width="1" height="1" fill="#ccc" />
<rect x="54" y="231" width="1" height="1" fill="#ccc" />
<g shape-rendering="auto"><rect x="59" y="224" width="13" height="13" rx="1" fill="#0c0"/><rect x="59" y="224" width="13" height="5.8500000000000005" rx="1" fill="#3e3" opacity=".75"/><rect x="59" y="235" width="13" height="2" fill="#0a0"/><path d="M67.10 230.50 L70.80 230.50 M66.63 231.63 L70.00 235.00 M65.50 232.10 L65.50 235.80 M64.37 231.63 L61.00 235.00 M63.90 230.50 L60.20 230.50 M64.37 229.37 L61.00 226.00 M65.50 228.90 L65.50 225.20 M66.63 229.37 L70.00 226.00 " stroke="#fff" stroke-width="1.3" stroke-linecap="butt" fill="none"/></g>
<text x="80" y="235" fill="#000" font-size="11" stroke="#000" stroke-width="0.25" textLength="388" lengthAdjust="spacingAndGlyphs" >$04 - Верхнее напряжение для расчёта времени переключения (константа)</text>
<text x="722.5" y="235" fill="#000" font-size="11" stroke="#000" stroke-width="0.25" text-anchor="end" >0,560</text>
<text x="802" y="235" fill="#000" font-size="11" stroke="#000" stroke-width="0.25" text-anchor="end" >-</text>
<text x="882" y="235" fill="#000" font-size="11" stroke="#000" stroke-width="0.25" text-anchor="end" >-</text>
<text x="895" y="235" fill="#000" font-size="11" stroke="#000" stroke-width="0.25" >V</text>
<rect x="46" y="249" width="1" height="1" fill="#ccc" />
<rect x="48" y="249" width="1" height="1" fill="#ccc" />
<rect x="50" y="249" width="1" height="1" fill="#ccc" />
<rect x="52" y="249" width="1" height="1" fill="#ccc" />
<rect x="54" y="249" width="1" height="1" fill="#ccc" />
<g shape-rendering="auto"><rect x="59" y="242" width="13" height="13" rx="1" fill="#0c0"/><rect x="59" y="242" width="13" height="5.8500000000000005" rx="1" fill="#3e3" opacity=".75"/><rect x="59" y="253" width="13" height="2" fill="#0a0"/><path d="M67.10 248.50 L70.80 248.50 M66.63 249.63 L70.00 253.00 M65.50 250.10 L65.50 253.80 M64.37 249.63 L61.00 253.00 M63.90 248.50 L60.20 248.50 M64.37 247.37 L61.00 244.00 M65.50 246.90 L65.50 243.20 M66.63 247.37 L70.00 244.00 " stroke="#fff" stroke-width="1.3" stroke-linecap="butt" fill="none"/></g>
<text x="80" y="253" fill="#000" font-size="11" stroke="#000" stroke-width="0.25" textLength="390" lengthAdjust="spacingAndGlyphs" >$06 - Время переключения от обеднённой к обогащённой смеси (расчётное)</text>
<text x="722.5" y="253" fill="#000" font-size="11" stroke="#000" stroke-width="0.25" text-anchor="end" >0,120</text>
<text x="802" y="253" fill="#000" font-size="11" stroke="#000" stroke-width="0.25" text-anchor="end" >0,000</text>
<text x="882" y="253" fill="#000" font-size="11" stroke="#000" stroke-width="0.25" text-anchor="end" >1,020</text>
<text x="895" y="253" fill="#000" font-size="11" stroke="#000" stroke-width="0.25" >s</text>
<rect x="19" y="258" width="973" height="18" fill="url(#p2)" />
<path d="M22.500 264 h8.500 l-4.250 6 z" fill="#666" shape-rendering="auto"/>
<text x="43.5" y="271" fill="#000" font-size="11" font-weight="bold" textLength="130" lengthAdjust="spacingAndGlyphs" >Банк 1 Лямбда-зонд 2</text>
<rect x="46" y="285" width="1" height="1" fill="#ccc" />
<rect x="48" y="285" width="1" height="1" fill="#ccc" />
<rect x="50" y="285" width="1" height="1" fill="#ccc" />
<rect x="52" y="285" width="1" height="1" fill="#ccc" />
<rect x="54" y="285" width="1" height="1" fill="#ccc" />
<g shape-rendering="auto"><rect x="59" y="278" width="13" height="13" rx="1" fill="#0c0"/><rect x="59" y="278" width="13" height="5.8500000000000005" rx="1" fill="#3e3" opacity=".75"/><rect x="59" y="289" width="13" height="2" fill="#0a0"/><path d="M67.10 284.50 L70.80 284.50 M66.63 285.63 L70.00 289.00 M65.50 286.10 L65.50 289.80 M64.37 285.63 L61.00 289.00 M63.90 284.50 L60.20 284.50 M64.37 283.37 L61.00 280.00 M65.50 282.90 L65.50 279.20 M66.63 283.37 L70.00 280.00 " stroke="#fff" stroke-width="1.3" stroke-linecap="butt" fill="none"/></g>
<text x="80" y="289" fill="#000" font-size="11" stroke="#000" stroke-width="0.25" textLength="520" lengthAdjust="spacingAndGlyphs" >$01 - Пороговое напряжения датчика при переходе от обогащённой к обеднённой смеси (константа)</text>
<text x="722.5" y="289" fill="#000" font-size="11" stroke="#000" stroke-width="0.25" text-anchor="end" >0,520</text>
<text x="802" y="289" fill="#000" font-size="11" stroke="#000" stroke-width="0.25" text-anchor="end" >-</text>
<text x="882" y="289" fill="#000" font-size="11" stroke="#000" stroke-width="0.25" text-anchor="end" >-</text>
<text x="895" y="289" fill="#000" font-size="11" stroke="#000" stroke-width="0.25" >V</text>
<rect x="46" y="303" width="1" height="1" fill="#ccc" />
<rect x="48" y="303" width="1" height="1" fill="#ccc" />
<rect x="50" y="303" width="1" height="1" fill="#ccc" />
<rect x="52" y="303" width="1" height="1" fill="#ccc" />
<rect x="54" y="303" width="1" height="1" fill="#ccc" />
<g shape-rendering="auto"><rect x="59" y="296" width="13" height="13" rx="1" fill="#0c0"/><rect x="59" y="296" width="13" height="5.8500000000000005" rx="1" fill="#3e3" opacity=".75"/><rect x="59" y="307" width="13" height="2" fill="#0a0"/><path d="M67.10 302.50 L70.80 302.50 M66.63 303.63 L70.00 307.00 M65.50 304.10 L65.50 307.80 M64.37 303.63 L61.00 307.00 M63.90 302.50 L60.20 302.50 M64.37 301.37 L61.00 298.00 M65.50 300.90 L65.50 297.20 M66.63 301.37 L70.00 298.00 " stroke="#fff" stroke-width="1.3" stroke-linecap="butt" fill="none"/></g>
<text x="80" y="307" fill="#000" font-size="11" stroke="#000" stroke-width="0.25" textLength="520" lengthAdjust="spacingAndGlyphs" >$02 - Пороговое напряжение датчика при переходе от обеднённой к обогащённой смеси (константа)</text>
<text x="722.5" y="307" fill="#000" font-size="11" stroke="#000" stroke-width="0.25" text-anchor="end" >0,520</text>
<text x="802" y="307" fill="#000" font-size="11" stroke="#000" stroke-width="0.25" text-anchor="end" >-</text>
<text x="882" y="307" fill="#000" font-size="11" stroke="#000" stroke-width="0.25" text-anchor="end" >-</text>
<text x="895" y="307" fill="#000" font-size="11" stroke="#000" stroke-width="0.25" >V</text>
<rect x="19" y="312" width="973" height="18" fill="url(#p2)" />
<path d="M22.500 318 h8.500 l-4.250 6 z" fill="#666" shape-rendering="auto"/>
<text x="43.5" y="325" fill="#000" font-size="11" font-weight="bold" textLength="130" lengthAdjust="spacingAndGlyphs" >Банк 2 Лямбда-зонд 1</text>
<rect x="59" y="332" width="13" height="1" fill="#9f9" />
<rect x="992" y="167" width="16" height="166" fill="#fff" />
<rect x="992" y="167" width="1" height="166" fill="#ccc" />
<rect x="1007" y="167" width="1" height="166" fill="#ccc" />
<rect x="994" y="168" width="12" height="144" fill="url(#p8)" />
<path d="M997 178.500 h6 l-3 -5 z" fill="#333" shape-rendering="auto"/>
<path d="M997 322.500 h6 l-3 5 z" fill="#333" shape-rendering="auto"/>
<g shape-rendering="auto"><path d="M994.500 300 v6 a5.500 5.500 0 0 0 11 0 v-6" fill="none" stroke="#bbb"/></g>
<linearGradient id="thumb" x1="0" x2="1" y1="0" y2="0"><stop offset="0" stop-color="#03c"/><stop offset=".25" stop-color="#39f"/><stop offset=".5" stop-color="#9df"/><stop offset=".8" stop-color="#4af"/><stop offset="1" stop-color="#05c"/></linearGradient>
<g shape-rendering="auto"><rect x="993.5" y="184.5" width="12" height="75" rx="6" fill="url(#thumb)" stroke="#03a"/></g>
<rect x="16" y="343" width="324" height="168" fill="#fff" />
<rect x="17" y="344" width="322" height="166" fill="#bbb" />
<rect x="18" y="345" width="320" height="164" fill="#fff" />
<rect x="18" y="345" width="320" height="19" fill="url(#p4)" />
<rect x="18" y="364" width="320" height="1" fill="#bbb" />
<rect x="238" y="345" width="1" height="19" fill="#ccc" />
<rect x="239" y="345" width="1" height="19" fill="#fff" />
<text x="22.5" y="359" fill="#000" font-size="11" stroke="#000" stroke-width="0.25" textLength="151.5" lengthAdjust="spacingAndGlyphs" >Расположение лямбда зондов</text>
<text x="243.8" y="359" fill="#000" font-size="11" stroke="#000" stroke-width="0.25" textLength="53.2" lengthAdjust="spacingAndGlyphs" >Состояние</text>
<g shape-rendering="auto"><path d="M27.5 367.5 h3 v5 h5 v3 h-5 v5 h-3 v-5 h-5 v-3 h5 z" fill="#4c4" stroke="#181" stroke-width="1" stroke-linejoin="round"/><path d="M29 369 v10 M24 374 h10" stroke="#8e8" stroke-width="1" stroke-dasharray="1 1"/></g>
<text x="42.5" y="378" fill="#000" font-size="11" stroke="#000" stroke-width="0.25" textLength="110" lengthAdjust="spacingAndGlyphs" >Банк 1 Лямбда-зонд 1</text>
<text x="245.5" y="378" fill="#008000" font-size="11" stroke="#008000" stroke-width="0.25" textLength="42" lengthAdjust="spacingAndGlyphs" >Имеется</text>
<rect x="18" y="383" width="320" height="18" fill="url(#p2)" />
<g shape-rendering="auto"><path d="M27.5 385.5 h3 v5 h5 v3 h-5 v5 h-3 v-5 h-5 v-3 h5 z" fill="#4c4" stroke="#181" stroke-width="1" stroke-linejoin="round"/><path d="M29 387 v10 M24 392 h10" stroke="#8e8" stroke-width="1" stroke-dasharray="1 1"/></g>
<text x="42.5" y="396" fill="#000" font-size="11" stroke="#000" stroke-width="0.25" textLength="110" lengthAdjust="spacingAndGlyphs" >Банк 1 Лямбда-зонд 2</text>
<text x="245.5" y="396" fill="#008000" font-size="11" stroke="#008000" stroke-width="0.25" textLength="42" lengthAdjust="spacingAndGlyphs" >Имеется</text>
<g shape-rendering="auto"><rect x="22.5" y="408.5" width="13" height="4" rx="2" fill="#e53" stroke="#b21"/></g>
<text x="42.5" y="414" fill="#000" font-size="11" stroke="#000" stroke-width="0.25" textLength="110" lengthAdjust="spacingAndGlyphs" >Банк 1 Лямбда-зонд 3</text>
<text x="245.5" y="414" fill="#f00" font-size="11" stroke="#f00" stroke-width="0.25" textLength="65.3" lengthAdjust="spacingAndGlyphs" >Отсутствует</text>
<rect x="18" y="419" width="320" height="18" fill="url(#p2)" />
<g shape-rendering="auto"><rect x="22.5" y="426.5" width="13" height="4" rx="2" fill="#e53" stroke="#b21"/></g>
<text x="42.5" y="432" fill="#000" font-size="11" stroke="#000" stroke-width="0.25" textLength="110" lengthAdjust="spacingAndGlyphs" >Банк 1 Лямбда-зонд 4</text>
<text x="245.5" y="432" fill="#f00" font-size="11" stroke="#f00" stroke-width="0.25" textLength="65.3" lengthAdjust="spacingAndGlyphs" >Отсутствует</text>
<g shape-rendering="auto"><path d="M27.5 439.5 h3 v5 h5 v3 h-5 v5 h-3 v-5 h-5 v-3 h5 z" fill="#4c4" stroke="#181" stroke-width="1" stroke-linejoin="round"/><path d="M29 441 v10 M24 446 h10" stroke="#8e8" stroke-width="1" stroke-dasharray="1 1"/></g>
<text x="42.5" y="450" fill="#000" font-size="11" stroke="#000" stroke-width="0.25" textLength="110" lengthAdjust="spacingAndGlyphs" >Банк 2 Лямбда-зонд 1</text>
<text x="245.5" y="450" fill="#008000" font-size="11" stroke="#008000" stroke-width="0.25" textLength="42" lengthAdjust="spacingAndGlyphs" >Имеется</text>
<rect x="18" y="455" width="320" height="18" fill="url(#p2)" />
<g shape-rendering="auto"><path d="M27.5 457.5 h3 v5 h5 v3 h-5 v5 h-3 v-5 h-5 v-3 h5 z" fill="#4c4" stroke="#181" stroke-width="1" stroke-linejoin="round"/><path d="M29 459 v10 M24 464 h10" stroke="#8e8" stroke-width="1" stroke-dasharray="1 1"/></g>
<text x="42.5" y="468" fill="#000" font-size="11" stroke="#000" stroke-width="0.25" textLength="110" lengthAdjust="spacingAndGlyphs" >Банк 2 Лямбда-зонд 2</text>
<text x="245.5" y="468" fill="#008000" font-size="11" stroke="#008000" stroke-width="0.25" textLength="42" lengthAdjust="spacingAndGlyphs" >Имеется</text>
<g shape-rendering="auto"><rect x="22.5" y="480.5" width="13" height="4" rx="2" fill="#e53" stroke="#b21"/></g>
<text x="42.5" y="486" fill="#000" font-size="11" stroke="#000" stroke-width="0.25" textLength="110" lengthAdjust="spacingAndGlyphs" >Банк 2 Лямбда-зонд 3</text>
<text x="245.5" y="486" fill="#f00" font-size="11" stroke="#f00" stroke-width="0.25" textLength="65.3" lengthAdjust="spacingAndGlyphs" >Отсутствует</text>
<rect x="18" y="491" width="320" height="18" fill="url(#p2)" />
<g shape-rendering="auto"><rect x="22.5" y="498.5" width="13" height="4" rx="2" fill="#e53" stroke="#b21"/></g>
<text x="42.5" y="504" fill="#000" font-size="11" stroke="#000" stroke-width="0.25" textLength="110" lengthAdjust="spacingAndGlyphs" >Банк 2 Лямбда-зонд 4</text>
<text x="245.5" y="504" fill="#f00" font-size="11" stroke="#f00" stroke-width="0.25" textLength="65.3" lengthAdjust="spacingAndGlyphs" >Отсутствует</text>
<clipPath id="cb"><rect x="18" y="519" width="99" height="21" rx="10.5"/></clipPath>
<g shape-rendering="auto"><rect x="17.5" y="518.5" width="100" height="22" rx="11" fill="#fff" stroke="#777"/></g>
<rect x="18" y="520" width="99" height="7" fill="url(#p38)" clip-path="url(#cb)"/>
<rect x="18" y="527" width="99" height="1" fill="#ccc" clip-path="url(#cb)"/>
<rect x="18" y="528" width="99" height="8" fill="url(#p2)" clip-path="url(#cb)"/>
<g shape-rendering="auto"><rect x="17.5" y="518.5" width="100" height="22" rx="11" fill="none" stroke="#777"/><path d="M27 541.500 H108" stroke="#ccc"/></g>
<text x="48.8" y="534" fill="#000" font-size="11" stroke="#000" stroke-width="0.25" textLength="36.4" lengthAdjust="spacingAndGlyphs" >Читать</text>
<rect x="348" y="342" width="661" height="169" fill="#000" />
<rect x="349" y="395" width="659" height="63" fill="url(#hatch)" />
<g stroke="#ccc" stroke-width="1" stroke-dasharray="18 6"><path d="M349 394.5 H1008 M349 458.5 H1008"/></g>
<path d="M355.6 420.5 L357.1 422.9 L358.6 425.4 L360.1 427.8 L361.6 430.2 L363.1 432.6 L364.6 435.0 L366.1 437.4 L367.6 439.7 L369.1 441.9 L370.6 444.2 L372.1 446.3 L373.6 448.4 L375.1 450.4 L376.6 452.3 L378.1 454.1 L379.6 455.9 L381.1 457.5 L382.6 459.1 L384.1 460.5 L385.6 461.8 L387.1 463.0 L388.6 464.1 L390.1 465.0 L391.6 465.9 L393.1 466.6 L394.6 467.1 L396.1 467.5 L397.6 467.8 L399.1 468.0 L400.6 468.0 L402.1 467.9 L403.6 467.6 L405.1 467.2 L406.6 466.7 L408.1 466.1 L409.6 465.3 L411.1 464.4 L412.6 463.4 L414.1 462.3 L415.6 461.1 L417.1 459.7 L418.6 458.3 L420.1 456.7 L421.6 455.1 L423.1 453.3 L424.6 451.5 L426.1 449.6 L427.6 447.6 L429.1 445.5 L430.6 443.4 L432.1 441.2 L433.6 439.0 L435.1 436.7 L436.6 434.4 L438.1 432.1 L439.6 429.7 L441.1 427.3 L442.6 425.0 L444.1 422.6 L445.6 420.2 L447.1 417.8 L448.6 415.5 L450.1 413.2 L451.6 410.9 L453.1 408.7 L454.6 406.5 L456.1 404.4 L457.6 402.3 L459.1 400.3 L460.6 398.4 L462.1 396.5 L463.6 394.8 L465.1 393.1 L466.6 391.5 L468.1 390.1 L469.6 388.7 L471.1 387.4 L472.6 386.3 L474.1 385.3 L475.6 384.4 L477.1 383.6 L478.6 382.9 L480.1 382.4 L481.6 382.0 L483.1 381.8 L484.6 381.6 L486.1 381.6 L487.6 381.7 L489.1 382.0 L490.6 382.4 L492.1 382.9 L493.6 383.5 L495.1 384.2 L496.6 385.1 L498.1 386.1 L499.6 387.2 L501.1 388.4 L502.6 389.7 L504.1 391.2 L505.6 392.7 L507.1 394.3 L508.6 396.1 L510.1 397.9 L511.6 399.8 L513.1 401.7 L514.6 403.8 L516.1 405.9 L517.6 408.1 L519.1 410.3 L520.6 412.6 L522.1 414.9 L523.6 417.3 L525.1 419.7 L526.6 422.1 L528.1 424.6 L529.6 427.0 L531.1 429.5 L532.6 431.9 L534.1 434.4 L535.6 436.8 L537.1 439.2 L538.6 441.6 L540.1 443.9 L541.6 446.2 L543.1 448.5 L544.6 450.7 L546.1 452.8 L547.6 454.9 L549.1 456.9 L550.6 458.8 L552.1 460.7 L553.6 462.5 L555.1 464.1 L556.6 465.7 L558.1 467.2 L559.6 468.6 L561.1 469.8 L562.6 471.0 L564.1 472.0 L565.6 473.0 L567.1 473.8 L568.6 474.5 L570.1 475.0 L571.6 475.5 L573.1 475.8 L574.6 475.9 L576.1 476.0 L577.6 475.9 L579.1 475.7 L580.6 475.4 L582.1 474.9 L583.6 474.3 L585.1 473.6 L586.6 472.8 L588.1 471.8 L589.6 470.7 L591.1 469.5 L592.6 468.2 L594.1 466.7 L595.6 465.2 L597.1 463.6 L598.6 461.8 L600.1 460.0 L601.6 458.1 L603.1 456.1 L604.6 454.0 L606.1 451.8 L607.6 449.6 L609.1 447.3 L610.6 445.0 L612.1 442.6 L613.6 440.1 L615.1 437.7 L616.6 435.2 L618.1 432.6 L619.6 430.1 L621.1 427.5 L622.6 425.0 L624.1 422.4 L625.6 419.9 L627.1 417.3 L628.6 414.8 L630.1 412.3 L631.6 409.9 L633.1 407.5 L634.6 405.1 L636.1 402.8 L637.6 400.6 L639.1 398.4 L640.6 396.3 L642.1 394.3 L643.6 392.4 L645.1 390.5 L646.6 388.8 L648.1 387.1 L649.6 385.5 L651.1 384.1 L652.6 382.8 L654.1 381.5 L655.6 380.4 L657.1 379.4 L658.6 378.6 L660.1 377.8 L661.6 377.2 L663.1 376.7 L664.6 376.3 L666.1 376.1 L667.6 376.0 L669.1 376.0 L670.6 376.2 L672.1 376.5 L673.6 376.9 L675.1 377.5 L676.6 378.1 L678.1 378.9 L679.6 379.9 L681.1 380.9 L682.6 382.1 L684.1 383.3 L685.6 384.7 L687.1 386.2 L688.6 387.8 L690.1 389.5 L691.6 391.3 L693.1 393.2 L694.6 395.1 L696.1 397.2 L697.6 399.3 L699.1 401.5 L700.6 403.7 L702.1 406.0 L703.6 408.4 L705.1 410.7 L706.6 413.2 L708.1 415.6 L709.6 418.1 L711.1 420.6 L712.6 423.1 L714.1 425.6 L715.6 428.1 L717.1 430.6 L718.6 433.0 L720.1 435.5 L721.6 437.9 L723.1 440.2 L724.6 442.6 L726.1 444.8 L727.6 447.0 L729.1 449.2 L730.6 451.3 L732.1 453.3 L733.6 455.2 L735.1 457.0 L736.6 458.8 L738.1 460.4 L739.6 462.0 L741.1 463.4 L742.6 464.8 L744.1 466.0 L745.6 467.1 L747.1 468.1 L748.6 469.0 L750.1 469.7 L751.6 470.3 L753.1 470.8 L754.6 471.2 L756.1 471.4 L757.6 471.5 L759.1 471.5 L760.6 471.3 L762.1 471.0 L763.6 470.6 L765.1 470.0 L766.6 469.4 L768.1 468.6 L769.6 467.6 L771.1 466.6 L772.6 465.4 L774.1 464.1 L775.6 462.7 L777.1 461.2 L778.6 459.6 L780.1 457.9 L781.6 456.1 L783.1 454.2 L784.6 452.3 L786.1 450.2 L787.6 448.1 L789.1 445.9 L790.6 443.6 L792.1 441.2 L793.6 438.9 L795.1 436.4 L796.6 433.9 L798.1 431.4 L799.6 428.9 L801.1 426.3 L802.6 423.8 L804.1 421.2 L805.6 418.6 L807.1 416.0 L808.6 413.5 L810.1 410.9 L811.6 408.4 L813.1 405.9 L814.6 403.4 L816.1 401.0 L817.6 398.7 L819.1 396.4 L820.6 394.1 L822.1 391.9 L823.6 389.8 L825.1 387.8 L826.6 385.9 L828.1 384.0 L829.6 382.3 L831.1 380.6 L832.6 379.0 L834.1 377.6 L835.6 376.2 L837.1 375.0 L838.6 373.9 L840.1 372.9 L841.6 372.0 L843.1 371.3 L844.6 370.7 L846.1 370.2 L847.6 369.8 L849.1 369.6 L850.6 369.5 L852.1 369.5 L853.6 369.7 L855.1 370.0 L856.6 370.5 L858.1 371.1 L859.6 371.8 L861.1 372.6 L862.6 373.6 L864.1 374.7 L865.6 376.0 L867.1 377.3 L868.6 378.8 L870.1 380.4 L871.6 382.1 L873.1 383.9 L874.6 385.8 L876.1 387.8 L877.6 389.9 L879.1 392.0 L880.6 394.3 L882.1 396.6 L883.6 399.0 L885.1 401.4 L886.6 403.8 L888.1 406.4 L889.6 408.9 L891.1 411.5 L892.6 414.1 L894.1 416.7 L895.6 419.3 L897.1 421.9 L898.6 424.5 L900.1 427.1 L901.6 429.6 L903.1 432.2 L904.6 434.6 L906.1 437.1 L907.6 439.4 L909.1 441.8 L910.6 444.0 L912.1 446.2 L913.6 448.3 L915.1 450.3 L916.6 452.2 L918.1 454.0 L919.6 455.8 L921.1 457.4 L922.6 458.9 L924.1 460.3 L925.6 461.5 L927.1 462.7 L928.6 463.7 L930.1 464.6 L931.6 465.3 L933.1 465.9 L934.6 466.4 L936.1 466.7 L937.6 466.9 L939.1 467.0 L940.6 467.0 L942.1 467.0 L943.6 467.0 L945.1 467.0 L946.6 466.8 L948.1 466.5 L949.6 466.0 L951.1 465.4 L952.6 464.7 L954.1 463.8 L955.6 462.8 L957.1 461.7 L958.6 460.4 L960.1 459.1 L961.6 457.6 L963.1 455.9 L964.6 454.2 L966.1 452.4 L967.6 450.4 L969.1 448.4 L970.6 446.2 L972.1 444.0 L973.6 441.6 L975.1 439.2 L976.6 436.7 L978.1 434.2 L979.6 431.6 L981.1 428.9 L982.6 426.2 L984.1 423.5 L985.6 420.7 L987.1 417.8 L988.6 415.0 L990.1 412.1 L991.6 409.3 L993.1 406.4 L994.6 403.5" fill="none" stroke="#0f0" stroke-width="1" stroke-linejoin="round" stroke-linecap="square"/>
<rect x="419" y="458" width="1" height="36" fill="#fff" />
<rect x="464" y="394" width="1" height="100" fill="#fff" />
<rect x="419" y="491" width="45" height="1" fill="#fff" />
<path d="M420 491.5 l5 -1.800 v3.600 z M464 491.5 l-5 -1.800 v3.600 z" fill="#fff" shape-rendering="auto"/>
<text x="440.45" y="488" fill="#ff0" font-size="11" stroke="#ff0" stroke-width="0.12" text-anchor="middle" textLength="17.5" lengthAdjust="spacingAndGlyphs" >$05</text>
<rect x="507" y="394" width="1" height="100" fill="#fff" />
<rect x="550" y="458" width="1" height="36" fill="#fff" />
<rect x="507" y="491" width="43" height="1" fill="#fff" />
<path d="M508 491.5 l5 -1.800 v3.600 z M550 491.5 l-5 -1.800 v3.600 z" fill="#fff" shape-rendering="auto"/>
<text x="527.4" y="488" fill="#ff0" font-size="11" stroke="#ff0" stroke-width="0.12" text-anchor="middle" textLength="17.5" lengthAdjust="spacingAndGlyphs" >$06</text>
<rect x="602" y="458" width="1" height="36" fill="#fff" />
<rect x="778" y="458" width="1" height="36" fill="#fff" />
<rect x="602" y="491" width="176" height="1" fill="#fff" />
<path d="M603 491.5 l5 -1.800 v3.600 z M778 491.5 l-5 -1.800 v3.600 z" fill="#fff" shape-rendering="auto"/>
<text x="688.8" y="488" fill="#ff0" font-size="11" stroke="#ff0" stroke-width="0.12" text-anchor="middle" textLength="17.5" lengthAdjust="spacingAndGlyphs" >$09</text>
<rect x="801" y="427" width="1" height="67" fill="#fff" />
<rect x="896" y="422" width="1" height="72" fill="#fff" />
<rect x="801" y="491" width="95" height="1" fill="#fff" />
<path d="M802 491.5 l5 -1.800 v3.600 z M896 491.5 l-5 -1.800 v3.600 z" fill="#fff" shape-rendering="auto"/>
<text x="847.45" y="488" fill="#ff0" font-size="11" stroke="#ff0" stroke-width="0.12" text-anchor="middle" textLength="18" lengthAdjust="spacingAndGlyphs" >$0A</text>
<rect x="563" y="476" width="26" height="1" fill="#fff" />
<text x="567" y="489" fill="#ff0" font-size="11" stroke="#ff0" stroke-width="0.12" textLength="17.5" lengthAdjust="spacingAndGlyphs" >$07</text>
<rect x="837" y="369" width="26" height="1" fill="#fff" />
<text x="841" y="366" fill="#ff0" font-size="11" stroke="#ff0" stroke-width="0.12" textLength="17.5" lengthAdjust="spacingAndGlyphs" >$08</text>
<rect x="795" y="427" width="12" height="1" fill="#fff" />
<text x="811" y="438" fill="#ff0" font-size="11" stroke="#ff0" stroke-width="0.12" textLength="17" lengthAdjust="spacingAndGlyphs" >$01</text>
<rect x="890" y="422" width="13" height="1" fill="#fff" />
<text x="905.5" y="433" fill="#ff0" font-size="11" stroke="#ff0" stroke-width="0.12" textLength="17.5" lengthAdjust="spacingAndGlyphs" >$02</text>
<text x="349" y="390" fill="#ff0" font-size="11" stroke="#ff0" stroke-width="0.12" textLength="17.5" lengthAdjust="spacingAndGlyphs" >$04</text>
<text x="349" y="472" fill="#ff0" font-size="11" stroke="#ff0" stroke-width="0.12" textLength="17.5" lengthAdjust="spacingAndGlyphs" >$03</text>
<text x="634" y="355" fill="#ff0" font-size="11" stroke="#ff0" stroke-width="0.12" textLength="100" lengthAdjust="spacingAndGlyphs" >Обогащённая смесь</text>
<text x="638" y="507" fill="#ff0" font-size="11" stroke="#ff0" stroke-width="0.12" textLength="93.5" lengthAdjust="spacingAndGlyphs" >Обеднённая смесь</text>
<rect x="0" y="556" width="1024" height="1" fill="#ccc" />
<rect x="0" y="557" width="1024" height="1" fill="#f4f4f4" />
<rect x="111" y="557" width="1" height="18" fill="#fff" />
<rect x="112" y="557" width="1" height="18" fill="#c4c4c4" />
<rect x="197" y="557" width="1" height="18" fill="#fff" />
<rect x="198" y="557" width="1" height="18" fill="#c4c4c4" />
<rect x="258" y="557" width="1" height="18" fill="#fff" />
<rect x="259" y="557" width="1" height="18" fill="#c4c4c4" />
<text x="4" y="570" fill="#000" font-size="11" stroke="#000" stroke-width="0.25" textLength="27" lengthAdjust="spacingAndGlyphs" >Порт:</text>
<text x="55" y="570" fill="#000" font-size="11" stroke="#000" stroke-width="0.25" textLength="28" lengthAdjust="spacingAndGlyphs" >COM4</text>
<text x="116.5" y="570" fill="#000" font-size="11" stroke="#000" stroke-width="0.25" textLength="60.5" lengthAdjust="spacingAndGlyphs" >Интерфейс:</text>
<text x="201.8" y="570" fill="#000" font-size="11" stroke="#000" stroke-width="0.25" textLength="22.5" lengthAdjust="spacingAndGlyphs" >ЭБУ:</text>
<rect x="90" y="562" width="17" height="9" fill="#000" />
<rect x="91" y="563" width="15" height="7" fill="#0f0" />
<rect x="175" y="562" width="17" height="9" fill="#000" />
<rect x="176" y="563" width="15" height="7" fill="#0f0" />
<rect x="236" y="562" width="17" height="9" fill="#000" />
<rect x="237" y="563" width="15" height="7" fill="#0f0" />
<text x="695" y="570" fill="#00e" font-size="11" font-weight="bold" textLength="85" lengthAdjust="spacingAndGlyphs" >www.wgsoft.de</text>
<text x="165.5" y="592" fill="#000" font-size="13" textLength="104" lengthAdjust="spacingAndGlyphs" >ScanMaster–ELM</text>
<text x="934.5" y="593" fill="#000" font-size="12" textLength="34.5" lengthAdjust="spacingAndGlyphs" >20:36</text>
<g transform="translate(2 5)" shape-rendering="auto"><path d="M0.5 7 L11 0.5 L15.5 5 L5 11.5 Z" fill="#c0c0c0" stroke="#000" stroke-width="1.1"/><path d="M1.500 5.300 l1.200 1.200 M3.700 4 l1.200 1.200 M5.900 2.700 l1.200 1.200 M8.100 1.400 l1.200 1.200" stroke="#220" stroke-width="1.600"/><path d="M6.300 10.800 l1.200 2.600 M8.500 9.500 l1.200 2.600 M10.700 8.200 l1.200 2.600 M12.900 6.900 l1.200 2.600 M15 5.600 l1 2.400" stroke="#000" stroke-width="1.700"/></g>
<g transform="translate(14 47)" shape-rendering="auto"><path d="M6 1 h9 v3 l-1.5 4 h-6 L6 4 z" fill="#c8c8c8" stroke="#222" stroke-width="1"/><path d="M6.5 0.5 h8" stroke="#ee0" stroke-width="1.4"/><path d="M8.5 2.5 v4 M10.5 2.5 v4 M12.5 2.5 v4" stroke="#888" stroke-width=".8"/><path d="M10.5 8 v2 q0 2 -3 2 h-4 q-2.5 0 -2.5 3" fill="none" stroke="#000" stroke-width="2"/><path d="M10.5 8 v2 q0 2 -3 2 h-4 q-2.5 0 -2.5 3" fill="none" stroke="#ccc" stroke-width=".7"/></g>
<g transform="translate(36 47)" shape-rendering="auto"><circle cx="8" cy="8" r="7.6" fill="#36c" stroke="#229" stroke-width=".8"/><path d="M3 4 A7 7 0 0 1 13 4 Q8 7 3 4Z" fill="#9cf" opacity=".8"/><path d="M4 6 l3 -1.5 3 .5 2 2 -1 3 -2 1 -.5 3 -2 .5 -1.5 -3 -2 -2 z" fill="#3c3"/><path d="M9 2 l3 1 1 2 -3 0 z" fill="#9e9"/></g>
<g transform="translate(61 47)" shape-rendering="auto"><path d="M0.5 0.5 h8.5 l3.5 3.5 v11.5 h-12 z" fill="#bdf" stroke="#77c" stroke-width="1"/><path d="M9 0.5 v3.5 h3.5 z" fill="#36c"/><rect x="2" y="3" width="4" height="4" fill="#c33"/><rect x="2" y="9" width="4" height="4" fill="#c33"/><path d="M2.5 4.5 l1.5 1.5 3 -4 M2.5 10.5 l1.5 1.5 3 -4" stroke="#f30" stroke-width="1.3" fill="none"/><rect x="3" y="4" width="2" height="2" fill="#333"/><rect x="3" y="10" width="2" height="2" fill="#333"/></g>
<g transform="translate(83 49)"><rect x="0.5" y="0.5" width="15" height="12" rx="1" fill="#fff" stroke="#06c" stroke-width="1.4"/><rect x="1" y="1" width="14" height="2" fill="#06c"/><rect x="3" y="4" width="3" height="3" fill="#96c"/><rect x="7" y="4" width="3" height="3" fill="#06c"/><rect x="11" y="4" width="3" height="3" fill="#093"/><rect x="3" y="8" width="3" height="3" fill="#f60"/><rect x="7" y="8" width="3" height="3" fill="#039"/><rect x="11" y="8" width="3" height="3" fill="#c80"/></g>
<g transform="translate(105 49)"><rect x="0.5" y="0.5" width="15" height="12" rx="1" fill="#cdf" stroke="#039" stroke-width="1.2"/><rect x="1" y="1" width="14" height="2" fill="#36c"/><rect x="4" y="6" width="2" height="5" fill="#e63"/><rect x="7" y="4" width="2" height="7" fill="#093"/><rect x="10" y="8" width="2" height="3" fill="#36c"/><rect x="12" y="6" width="2" height="5" fill="#e63"/><rect x="2" y="3" width="1" height="8" fill="#999"/><rect x="2" y="11" width="12" height="1" fill="#999"/></g>
<g transform="translate(128 47)" shape-rendering="auto"><rect x="0.75" y="0.75" width="14.5" height="14.5" fill="#fff" stroke="#000" stroke-width="1.5"/><path d="M1.5 1.5 h7 l-1.5 5 h-5.5z" fill="#f63"/><path d="M9.5 1.5 h5 v7 l-5.5 -2 z" fill="#6a3"/><path d="M1.5 7.5 h4.5 l1.5 7 h-6 z" fill="#47c"/><path d="M8 9 l6.5 1 v4.500 h-6 z" fill="#fc0"/></g>
<g transform="translate(154 48)" shape-rendering="auto"><circle cx="5" cy="4.5" r="4.3" fill="#111"/><circle cx="6" cy="5" r="3.2" fill="#c63"/><path d="M0.5 14 q0 -5 5 -5 q5 0 5 5 z" fill="#1a1"/><path d="M4.5 9 l1.200 3 1.200 -3z" fill="#cfc"/></g>
<g transform="translate(183 47)" shape-rendering="auto"><rect x="0.5" y="1.5" width="12" height="14" rx="1" fill="#fc3" stroke="#c80" stroke-width="1"/><rect x="3.5" y="0.5" width="6" height="3" rx="1" fill="#ddd" stroke="#333" stroke-width="1"/><path d="M5.5 5.500 h6 l3 3 v7 h-9z" fill="#def" stroke="#66a" stroke-width="1"/><path d="M7 9.500 h6 M7 11.500 h6 M7 13.500 h6" stroke="#39f" stroke-width="1"/></g>
<g transform="translate(214 47)" shape-rendering="auto"><rect x="0.5" y="0.5" width="14" height="11" fill="#ffc" stroke="#66c" stroke-width="1"/><rect x="0" y="0" width="15" height="2.500" fill="#36c"/><rect x="0" y="10" width="15" height="1.500" fill="#36c"/><circle cx="8.500" cy="7" r="3.800" fill="#bdf" stroke="#aaa" stroke-width="1.300"/><path d="M5.500 10 L1 15" stroke="#f93" stroke-width="2" stroke-linecap="round"/></g>
<g transform="translate(236 49)"><rect x="0" y="0" width="16" height="13" fill="#000"/><rect x="0" y="0" width="16" height="2" fill="#039"/><rect x="10" y="0" width="5" height="1" fill="#9cf"/><rect x="15" y="2" width="1" height="11" fill="#555"/><rect x="1" y="12" width="15" height="1" fill="#336"/><path d="M2 4.500 l2.500 1.500 -2.500 1.500" stroke="#fff" stroke-width="1.200" fill="none" shape-rendering="auto"/></g>
<g transform="translate(263 47)" shape-rendering="auto"><rect x="0.500" y="0.500" width="8" height="15" rx="1.500" fill="#e82" stroke="#a50" stroke-width="1"/><rect x="2" y="2.500" width="5" height="9" fill="#9e9"/><rect x="3" y="5" width="3" height="4" fill="#6b6"/><rect x="3" y="13" width="3" height="1.500" fill="#fc6"/></g>
<g transform="translate(282 47)" shape-rendering="auto"><circle cx="8" cy="8" r="7.800" fill="#444"/><circle cx="8" cy="8" r="6.300" fill="#555"/><path d="M3.500 3.500 L9 9" stroke="#fff" stroke-width="1.300"/><path d="M3 11 a6 6 0 0 0 10 0" stroke="#224" stroke-width="1" fill="none"/><path d="M8 2 v1.500 M12.500 4 l-1 1 M14 8 h-1.500" stroke="#999" stroke-width=".8"/></g>
<g transform="translate(313 47)" shape-rendering="auto"><circle cx="8" cy="8" r="7.600" fill="#cdf" stroke="#9bd" stroke-width=".8"/><circle cx="8" cy="7" r="5.500" fill="#eef6ff"/><circle cx="8" cy="3.800" r="1.400" fill="#028"/><path d="M6 6.500 h3.200 v5 h1.300 v1.300 h-5 v-1.300 h1.500 v-3.700 h-1 z" fill="#028"/></g>
<g transform="translate(338 47)" shape-rendering="auto"><rect x="5" y="1.500" width="7.500" height="12" fill="#bdf" stroke="#55b" stroke-width="1"/><rect x="7" y="7.500" width="4.500" height="4" fill="#084"/><path d="M0.500 2 L6 0.500 V15.500 L0.500 13.500 Z" fill="#88d" stroke="#55b" stroke-width="1"/><circle cx="4.300" cy="8" r=".9" fill="#fff"/></g>
<g transform="translate(17 77)" shape-rendering="auto"><path d="M0.500 9 l2 -3 h9 l2 3 v3 l-2 2 h-2 l-1 1.500 h-3 l-1 -1.500 h-2 l-2 -2 z" fill="#fb1" stroke="#c80" stroke-width=".8"/><path d="M3 9 h8 l-1 3 h-6 z" fill="#fe6" opacity=".8"/><rect x="4.500" y="0.500" width="5" height="9.500" rx="1.500" fill="#bbb" stroke="#888" stroke-width="1"/><rect x="6" y="3" width="2" height="5" fill="#dde"/></g>
<g transform="translate(213 78)" shape-rendering="auto"><rect x="0.500" y="0.500" width="13" height="13" rx="1.500" fill="#fff" stroke="#36c" stroke-width="1.200"/><path d="M2 3.500 h10 M2 5.500 h10 M2 7.500 h10 M2 9.500 h10 M2 11.500 h10" stroke="#2a2" stroke-width="1.100"/></g>
<g transform="translate(405 79)"><rect x="0.5" y="0.5" width="15" height="12" rx="1" fill="#fff" stroke="#06c" stroke-width="1.4"/><rect x="1" y="1" width="14" height="2" fill="#06c"/><rect x="3" y="4" width="3" height="3" fill="#96c"/><rect x="7" y="4" width="3" height="3" fill="#06c"/><rect x="11" y="4" width="3" height="3" fill="#093"/><rect x="3" y="8" width="3" height="3" fill="#f60"/><rect x="7" y="8" width="3" height="3" fill="#039"/><rect x="11" y="8" width="3" height="3" fill="#c80"/></g>
<g transform="translate(612 79)"><rect x="0.5" y="0.5" width="15" height="12" rx="1" fill="#cdf" stroke="#039" stroke-width="1.2"/><rect x="1" y="1" width="14" height="2" fill="#36c"/><rect x="4" y="6" width="2" height="5" fill="#e63"/><rect x="7" y="4" width="2" height="7" fill="#093"/><rect x="10" y="8" width="2" height="3" fill="#36c"/><rect x="12" y="6" width="2" height="5" fill="#e63"/><rect x="2" y="3" width="1" height="8" fill="#999"/><rect x="2" y="11" width="12" height="1" fill="#999"/></g>
<g transform="translate(807.5 77)" shape-rendering="auto"><path d="M0.5 0.5 h8.5 l3.5 3.5 v11.5 h-12 z" fill="#bdf" stroke="#77c" stroke-width="1"/><path d="M9 0.5 v3.5 h3.5 z" fill="#36c"/><rect x="2" y="3" width="4" height="4" fill="#c33"/><rect x="2" y="9" width="4" height="4" fill="#c33"/><path d="M2.5 4.5 l1.5 1.5 3 -4 M2.5 10.5 l1.5 1.5 3 -4" stroke="#f30" stroke-width="1.3" fill="none"/><rect x="3" y="4" width="2" height="2" fill="#333"/><rect x="3" y="10" width="2" height="2" fill="#333"/></g>
<g transform="translate(933 79)" shape-rendering="auto"><path d="M0.5 7 L11 0.5 L15.5 5 L5 11.5 Z" fill="#c0c0c0" stroke="#000" stroke-width="1.1"/><path d="M1.500 5.300 l1.200 1.200 M3.700 4 l1.200 1.200 M5.900 2.700 l1.200 1.200 M8.100 1.400 l1.200 1.200" stroke="#220" stroke-width="1.600"/><path d="M6.300 10.800 l1.200 2.600 M8.500 9.500 l1.200 2.600 M10.700 8.200 l1.200 2.600 M12.900 6.900 l1.200 2.600 M15 5.600 l1 2.400" stroke="#000" stroke-width="1.700"/></g>
<g transform="translate(31 96)" shape-rendering="auto"><path d="M1 8 L8 3.500 L14.500 7.500 V12 L8 15 L1 12 Z" fill="#fff" stroke="#999" stroke-width=".8"/><path d="M0.300 6 L5.500 0.500 L9.500 2 L4 8.500 Z" fill="#f90" stroke="#c60" stroke-width=".8"/><path d="M7 1 l2 -1 1.500 1.500 -1.500 1.500 z" fill="#f90"/><path d="M9 10 l2.500 -1.200 v4 l-2.500 1.200 z" fill="#840"/></g>
<g transform="translate(131 97)"><rect x="1" y="0" width="4" height="3" fill="#000"/><rect x="2" y="1" width="2" height="1" fill="#09f"/><rect x="0" y="4" width="5" height="2" fill="#000"/><rect x="1" y="5" width="4" height="6" fill="#000"/><rect x="0" y="10" width="6" height="3" fill="#000"/><rect x="2" y="5" width="2" height="6" fill="#09f"/><rect x="1" y="11" width="4" height="1" fill="#09f"/></g>
<g transform="translate(334 96)" shape-rendering="auto"><path d="M0.500 0.500 h8 l3.500 3.500 v10.500 h-11.500 z" fill="#e6f0ff" stroke="#69e" stroke-width="1"/><path d="M8.500 0.500 v3.500 h3.500 z" fill="#9bf"/><rect x="2.800" y="6.300" width="6.400" height="6" fill="#fff" stroke="#039" stroke-width="1.600"/><path d="M4 8.500 l2 2.800 L12.500 3.500" stroke="#f22" stroke-width="1.700" fill="none"/></g>
<g transform="translate(485 97)" shape-rendering="auto"><path d="M7 0.500 L13.500 13.500 H0.500 Z" fill="#f62" stroke="#f40" stroke-width="1" stroke-linejoin="round"/><path d="M7 3 L10.500 10 H3.500 Z" fill="#fa3" opacity=".7"/><path d="M7 4 v5" stroke="#fff" stroke-width="1.800"/><circle cx="7" cy="11.300" r="1" fill="#fff"/></g>
<g transform="translate(617 96)" shape-rendering="auto"><path d="M0.500 9 l2 -3 h9 l2 3 v3 l-2 2 h-2 l-1 1.500 h-3 l-1 -1.500 h-2 l-2 -2 z" fill="#fb1" stroke="#c80" stroke-width=".8"/><path d="M3 9 h8 l-1 3 h-6 z" fill="#fe6" opacity=".8"/><rect x="4.500" y="0.500" width="5" height="9.500" rx="1.500" fill="#bbb" stroke="#888" stroke-width="1"/><rect x="6" y="3" width="2" height="5" fill="#dde"/></g>
<g shape-rendering="auto"><rect x="741" y="95" width="13.5" height="13.5" rx="1" fill="#0c0"/><rect x="741" y="95" width="13.5" height="6.075" rx="1" fill="#3e3" opacity=".75"/><rect x="741" y="106.5" width="13.5" height="2" fill="#0a0"/><path d="M749.35 101.75 L753.30 101.75 M748.88 102.88 L752.48 106.48 M747.75 103.35 L747.75 107.30 M746.62 102.88 L743.02 106.48 M746.15 101.75 L742.20 101.75 M746.62 100.62 L743.02 97.02 M747.75 100.15 L747.75 96.20 M748.88 100.62 L752.48 97.02 " stroke="#fff" stroke-width="1.3" stroke-linecap="butt" fill="none"/></g>
<g transform="translate(879 96)" shape-rendering="auto"><circle cx="7.500" cy="7.500" r="4.700" fill="none" stroke="#88c" stroke-width="2.600"/><circle cx="7.500" cy="7.500" r="6.500" fill="none" stroke="#88c" stroke-width="2" stroke-dasharray="2.600 2.505"/><circle cx="7.500" cy="7.500" r="5.300" fill="none" stroke="#aad" stroke-width=".8"/></g>
<g transform="translate(146 582)" shape-rendering="auto"><path d="M0.5 7 L11 0.5 L15.5 5 L5 11.5 Z" fill="#c0c0c0" stroke="#000" stroke-width="1.1"/><path d="M1.500 5.300 l1.200 1.200 M3.700 4 l1.200 1.200 M5.900 2.700 l1.200 1.200 M8.100 1.400 l1.200 1.200" stroke="#220" stroke-width="1.600"/><path d="M6.300 10.800 l1.200 2.600 M8.500 9.500 l1.200 2.600 M10.700 8.200 l1.200 2.600 M12.900 6.900 l1.200 2.600 M15 5.600 l1 2.400" stroke="#000" stroke-width="1.700"/></g>
<g transform="translate(21 577)" shape-rendering="auto"><path d="M7.500 5.500 C5.500 4.300 1 5 0.500 10 C0.200 14 3 20 5.500 20 C6.500 20 7 19.300 8 19.300 C9 19.300 9.500 20 10.500 20 C12.500 20 14.500 16 14.800 14.500 C12 13.500 11.500 9 14.300 7.500 C13 5 9.500 4.500 7.500 5.500 Z" fill="#27e"/><path d="M7.300 5 C7.300 2.500 9 0.800 11 0.300 C11.200 2.500 9.500 4.500 7.300 5 Z" fill="#27e"/><path d="M2 9 C3 6.500 5.500 6 7 7 C5 7.500 3.500 9 3 12 Z" fill="#8bf"/></g>
<g transform="translate(51 581)" shape-rendering="auto"><circle cx="7" cy="7" r="7" fill="#184"/><path d="M3.500 3.500 v4.500 a3 3 0 0 0 6 0 v-4.500 M9.500 10.500 l1.500 1" stroke="#fff" stroke-width="2" fill="none"/></g>
<g transform="translate(74 581)" shape-rendering="auto"><circle cx="7" cy="7" r="7" fill="#db4437"/><path d="M7 7 L0.950 10.500 A7 7 0 0 0 7 14 L10.500 8 Z" fill="#0f9d58"/><path d="M7 7 L7 14 A7 7 0 0 0 13.050 3.500 L7 3.500 Z" fill="#ffcd40"/><path d="M7 7 L0.950 10.500 A7 7 0 0 0 6 13.900 L9.500 8.500 Z" fill="#0f9d58"/><circle cx="7" cy="7" r="3.200" fill="#fff"/><circle cx="7" cy="7" r="2.500" fill="#4285f4"/></g>
<g transform="translate(96 580)" shape-rendering="auto"><circle cx="8" cy="8" r="6.800" fill="none" stroke="#f73" stroke-width="1.700" stroke-dasharray="34 8.700" transform="rotate(50 8 8)"/><circle cx="8" cy="8" r="2.800" fill="none" stroke="#f73" stroke-width="1.600"/><path d="M11 5 v4.500 q0 2 2 1.700 q1.700 -.5 1.700 -3" fill="none" stroke="#f73" stroke-width="1.500"/></g>
<path d="M127 584 l5 4 -5 4 z" fill="#bbb" shape-rendering="auto"/>
<rect x="873" y="591" width="3" height="3" fill="#333" />
<rect x="874" y="592" width="1" height="1" fill="#9e9" />
<rect x="876" y="589" width="3" height="5" fill="#333" />
<rect x="877" y="590" width="1" height="3" fill="#9e9" />
<rect x="879" y="586" width="3" height="8" fill="#333" />
<rect x="880" y="587" width="1" height="6" fill="#9e9" />
<rect x="882" y="584" width="3" height="10" fill="#333" />
<rect x="883" y="585" width="1" height="8" fill="#eee" />
<rect x="885" y="583" width="3" height="11" fill="#333" />
<rect x="886" y="584" width="1" height="9" fill="#eee" />
<g transform="translate(891 580)" shape-rendering="auto"><path d="M0.500 4.500 h3 l5 -4 v14.500 l-5 -4 h-3 z" fill="#eef" stroke="#556" stroke-width="1"/><path d="M10 5.500 q1.300 2.200 0 4.400 M12 4 q2.200 3.700 0 7.400 M14 2.500 q3.200 5.200 0 10.400" stroke="#2a2" stroke-width="1" fill="none"/></g>
<g transform="translate(909 580)" shape-rendering="auto"><path d="M2 2.500 h5 v4 q0 3 -2 3.500 v4 h-1.500 v-4 q-2.500 -.5 -2.500 -3.500 z" fill="#fff" stroke="#000" stroke-width="1.300"/><circle cx="9" cy="3.500" r="2.500" fill="#ee0"/><circle cx="9.500" cy="9" r="1.800" fill="#ee0"/><circle cx="9" cy="13" r="1.300" fill="#ee0"/><rect x="3" y="0" width="1.500" height="3" fill="#000"/></g>
<g transform="translate(987 578)" shape-rendering="auto"><circle cx="9.300" cy="9.500" r="9.300" fill="#59e"/><circle cx="8.300" cy="8.300" r="4" fill="none" stroke="#fff" stroke-width="2"/><path d="M11 11.500 l4 4" stroke="#fff" stroke-width="2.200" stroke-linecap="round"/></g>
<!--CONTENT-->
</svg></body></html>
